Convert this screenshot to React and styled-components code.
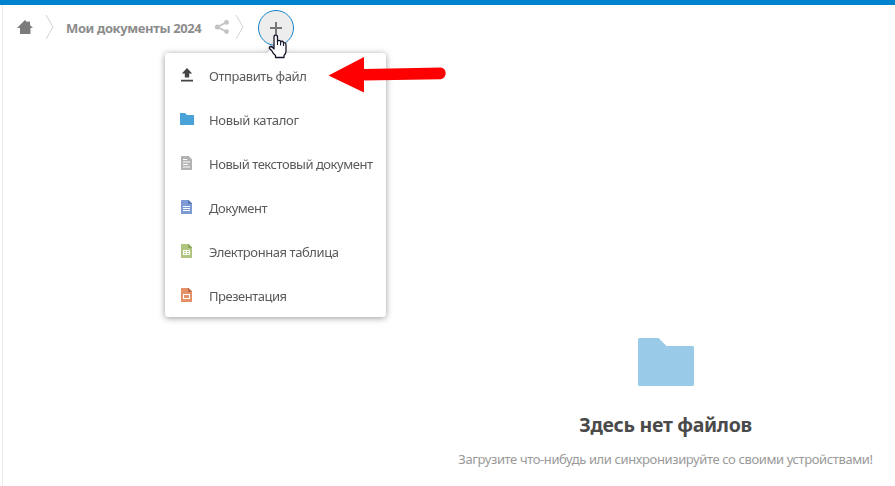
import React from "react";
import styled, { createGlobalStyle } from "styled-components";

const GlobalStyle = createGlobalStyle`
  * { box-sizing: border-box; }
  html, body { margin: 0; background: #fff; overflow: hidden; }
  body { font-family: "Noto Sans", "Open Sans", sans-serif; font-size: 13px; }
`;

const Page = styled.div`
  height: 486px;
  display: flex;
  flex-direction: column;
  background: #fff;
`;

const TopBar = styled.header`
  height: 5px;
  flex: none;
  background: #0082cc;
`;

const Content = styled.main`
  flex: 1;
  margin-left: 2px;
  border-left: 1px solid #ebebeb;
  display: flex;
  flex-direction: column;
`;

const Controls = styled.nav`
  display: flex;
  align-items: center;
  height: 46px;
  padding-left: 14px;
`;

const Icon = styled.svg`
  display: block;
  flex: none;
  overflow: visible;
`;

const HomeLink = styled.a`
  display: flex;
  width: 28px;
  padding-bottom: 2px;
`;

const Separator = styled.span`
  display: flex;
  padding-bottom: 2px;
`;

const FolderLink = styled.a`
  margin-left: 12px;
  width: 148px;
  font-weight: 700;
  line-height: 20px;
  letter-spacing: -0.37px;
  white-space: nowrap;
  color: #8c8c8c;
`;

const ShareLink = styled.a`
  display: flex;
  width: 21px;
`;

const NewMenu = styled.div`
  position: relative;
  margin-left: 14px;
`;

const AddButton = styled.button`
  display: flex;
  align-items: center;
  justify-content: center;
  width: 36px;
  height: 36px;
  padding: 0;
  border: 1px solid #1482c8;
  border-radius: 50%;
  background: #ededed;
`;

const Menu = styled.ul`
  position: absolute;
  left: -93px;
  top: 43px;
  width: 221px;
  height: 264px;
  margin: 0;
  padding: 0;
  list-style: none;
  background: #fff;
  border-radius: 3px;
  filter: drop-shadow(0 1px 3px rgba(50, 50, 50, 0.5));

  &::before {
    content: "";
    position: absolute;
    left: 102px;
    top: -9px;
    border: 9px solid transparent;
    border-top: 0;
    border-bottom-color: #fff;
  }
`;

const MenuItem = styled.li`
  display: flex;
  align-items: center;
  height: 44px;
  padding: 1px 0 0 14px;
  color: #5a5a5a;
  white-space: nowrap;

  svg { margin: -1px 14px 0 0; }
`;

const Label = styled.span`
  letter-spacing: ${(p) => p.$tracking}px;
`;

const Cursor = styled(Icon)`
  position: absolute;
  left: 10px;
  top: 24px;
  z-index: 2;
`;

const Arrow = styled(Icon)`
  position: absolute;
  left: 68px;
  top: 45px;
  z-index: 2;
`;

const Empty = styled.section`
  display: flex;
  flex-direction: column;
  align-items: center;
  margin: 287px 0 0 430px;
  width: 465px;
`;

const EmptyTitle = styled.h2`
  margin: 24px 0 0;
  font-size: 19.5px;
  line-height: 30px;
  font-weight: 700;
  letter-spacing: -0.3px;
  color: #4a4a4a;
  white-space: nowrap;
`;

const EmptyText = styled.p`
  margin: 9px 0 0;
  line-height: 20px;
  letter-spacing: -0.385px;
  color: #999;
  white-space: nowrap;
`;

const Chevron = () => (
  <Separator>
    <Icon width="9" height="24" viewBox="0 0 9 24">
      <path d="M1 0L8 12L1 24" fill="none" stroke="#d2d2d2" />
    </Icon>
  </Separator>
);

const UploadIcon = () => (
  <Icon width="16" height="16" viewBox="0 0 16 16">
    <path d="M8 1L13.2 6.5H10.2V10.5H5.8V6.5H2.8Z M2 12.8H14V14.5H2Z" fill="#444" />
  </Icon>
);

const FolderIcon = () => (
  <Icon width="16" height="16" viewBox="0 0 16 16">
    <path d="M1.5 2H6L8 4H14.5Q15 4 15 4.5V13.5Q15 14 14.5 14H1.5Q1 14 1 13.5V2.5Q1 2 1.5 2Z" fill="#4aa3d8" />
  </Icon>
);

const FileIcon = ({ color, fold, children }) => (
  <Icon width="16" height="16" viewBox="0 0 16 16">
    <path d="M2.5 1H9.5L13 4.5V14.5Q13 15 12.5 15H2.5Q2 15 2 14.5V1.5Q2 1 2.5 1Z" fill={color} />
    <path d="M9 1H9.5L13 4.5V5H9Z" fill={fold} />
    {children}
  </Icon>
);

const items = [
  { label: "Отправить файл", tracking: -0.43, icon: <UploadIcon /> },
  { label: "Новый каталог", tracking: -0.33, icon: <FolderIcon /> },
  {
    label: "Новый текстовый документ",
    tracking: -0.47,
    icon: (
      <FileIcon color="#b3b3b3" fold="#b3b3b3">
        <path d="M4 4.5H8M4 7H11M4 9.5H9M4 12H11" stroke="#fff" />
      </FileIcon>
    ),
  },
  {
    label: "Документ",
    tracking: -0.48,
    icon: (
      <FileIcon color="#7d9ad4" fold="#5878b5">
        <path d="M4 7.5H11M4 9.5H11M4 11.5H11" stroke="#fff" />
      </FileIcon>
    ),
  },
  {
    label: "Электронная таблица",
    tracking: -0.43,
    icon: (
      <FileIcon color="#b0c580" fold="#8da65c">
        <path d="M4 7H11V12H4Z" fill="#fff" />
        <path d="M5 8.5H7M8 8.5H10M5 10.5H7M8 10.5H10" stroke="#b0c580" />
      </FileIcon>
    ),
  },
  {
    label: "Презентация",
    tracking: -0.48,
    icon: (
      <FileIcon color="#e69068" fold="#bd6c47">
        <rect x="4.5" y="7.5" width="6" height="4" fill="none" stroke="#fff" />
      </FileIcon>
    ),
  },
];

export default function App() {
  return (
    <Page>
      <GlobalStyle />
      <TopBar />
      <Content>
        <Controls>
          <HomeLink>
            <Icon width="16" height="16" viewBox="0 0 16 16">
              <path d="M8 1L10.5 3.5V2.5H13V6L16 9H13.5V15H3V9H0Z" fill="#7b7b7b" />
            </Icon>
          </HomeLink>
          <Chevron />
          <FolderLink>Мои документы 2024</FolderLink>
          <ShareLink>
            <Icon width="16" height="16" viewBox="0 0 16 16">
              <path d="M12.5 2.3L3.5 7L12.5 11.7" fill="none" stroke="#c3c3c3" strokeWidth="1.8" />
              <circle cx="12.5" cy="2.4" r="2.4" fill="#c3c3c3" />
              <circle cx="3.4" cy="7" r="2.5" fill="#c3c3c3" />
              <circle cx="12.5" cy="11.6" r="2.4" fill="#c3c3c3" />
            </Icon>
          </ShareLink>
          <Chevron />
          <NewMenu>
            <AddButton aria-label="Создать">
              <Icon width="12" height="12" viewBox="0 0 12 12">
                <path d="M6 0V12M0 6H12" stroke="#777" strokeWidth="2" />
              </Icon>
            </AddButton>
            <Menu>
              {items.map((item) => (
                <MenuItem key={item.label}>
                  {item.icon}
                  <Label $tracking={item.tracking}>{item.label}</Label>
                </MenuItem>
              ))}
            </Menu>
            <Cursor width="19" height="25" viewBox="0 0 19 25">
              <path
                d="M6 15V3Q6 1 7.7 1Q9.5 1 9.5 3V7.5Q9.7 6.3 11 6.3Q12.5 6.3 12.7 8Q13 7 14.2 7.2Q15.5 7.5 15.5 9Q18 8.2 18 11V17Q18 20 16 21.5V23.5H7.5V21.5Q5 19.5 3.8 16.7L1.5 14.5Q1 12.5 3 12.5Q4.5 12.8 6 15Z"
                fill="#fff" stroke="#14142a" strokeWidth="1.3" strokeLinejoin="round"
              />
              <path d="M9.5 7.5V11M12.6 8V11.5M15.5 9V12" stroke="#14142a" strokeWidth="1.1" />
            </Cursor>
            <Arrow width="122" height="40" viewBox="0 0 122 40">
              <path d="M2.5 20.5L38 2V14L115 12.5A6 6 0 0 1 115 24.2L38 25.5V37.5Z" fill="#fe0000" />
            </Arrow>
          </NewMenu>
        </Controls>
        <Empty>
          <Icon width="56" height="48" viewBox="0 0 56 48">
            <path d="M1.5 0H20.5L28.5 8H54.5Q56 8 56 9.5V46.5Q56 48 54.5 48H1.5Q0 48 0 46.5V1.5Q0 0 1.5 0Z" fill="#99cbe9" />
          </Icon>
          <EmptyTitle>Здесь нет файлов</EmptyTitle>
          <EmptyText>Загрузите что-нибудь или синхронизируйте со своими устройствами!</EmptyText>
        </Empty>
      </Content>
    </Page>
  );
}
